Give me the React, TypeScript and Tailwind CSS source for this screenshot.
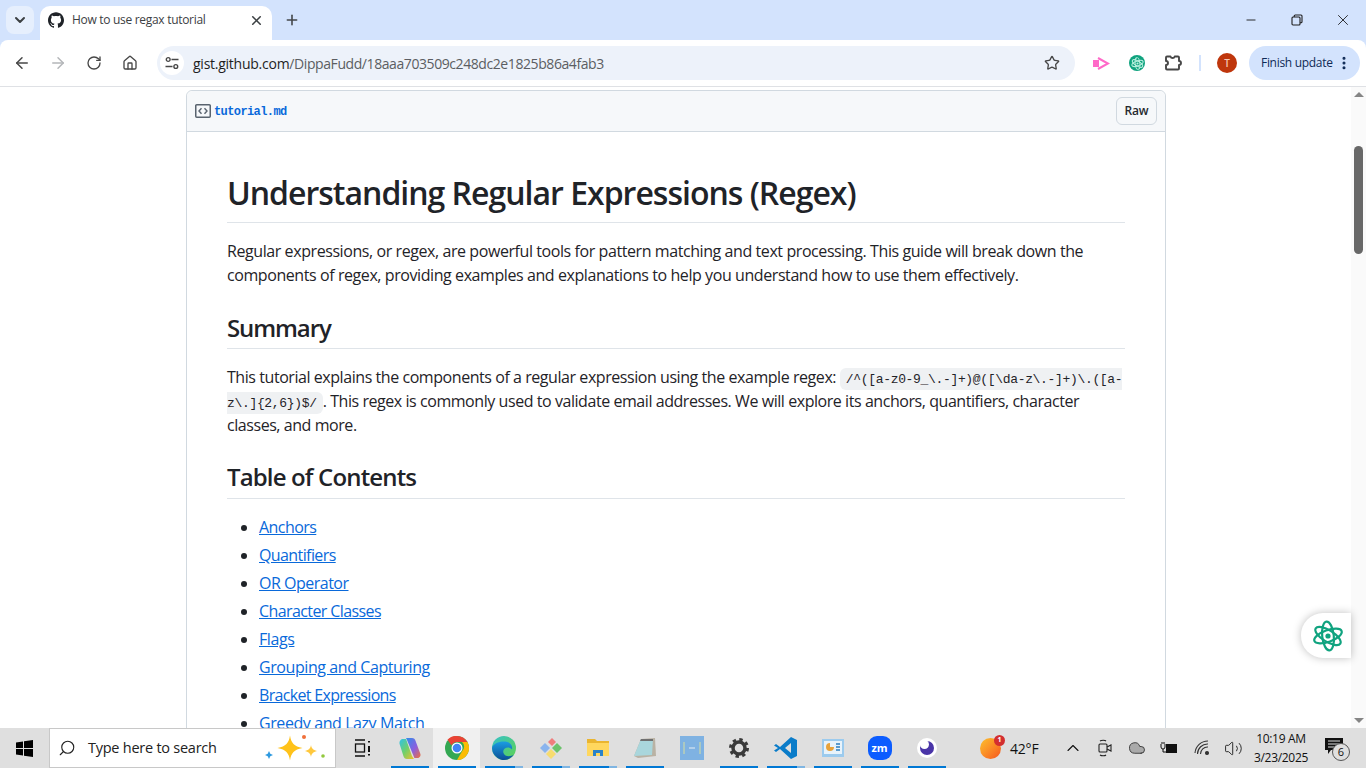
import { SiGithub } from "react-icons/si";
import { ArrowLeft, ArrowRight, RotateCw, Home, Star, Search, ChevronDown, ChevronUp, X, Plus, Minus, MoreVertical, Volume2, Cloud } from "lucide-react";

const sans = "font-['Open_Sans','Noto_Sans',sans-serif]";

function ChromeLogo({ size = 24 }: { size?: number }) {
  return (
    <svg width={size} height={size} viewBox="0 0 48 48">
      <circle cx="24" cy="24" r="24" fill="#34a853" />
      <path d="M24 0a24 24 0 0 1 20.8 12H24a12 12 0 0 0-10.9 7L5 7.6A24 24 0 0 1 24 0z" fill="#ea4335" />
      <path d="M44.8 12A24 24 0 0 1 24 48l10.4-18a12 12 0 0 0-.4-18z" fill="#fbbc04" />
      <circle cx="24" cy="24" r="11" fill="#fff" />
      <circle cx="24" cy="24" r="8.6" fill="#4285f4" />
    </svg>
  );
}

function GptFlower({ size = 32, color = "#10a37f", width = 2.2 }: { size?: number; color?: string; width?: number }) {
  return (
    <svg width={size} height={size} viewBox="0 0 32 32" fill="none" stroke={color} strokeWidth={width}>
      <ellipse cx="16" cy="16" rx="14.5" ry="5.8" transform="rotate(-20 16 16)" />
      <ellipse cx="16" cy="16" rx="14.5" ry="5.8" transform="rotate(32 16 16)" />
      <ellipse cx="16" cy="16" rx="14.5" ry="5.8" transform="rotate(84 16 16)" />
      <circle cx="16" cy="16" r="2.6" fill={color} stroke="none" />
    </svg>
  );
}

function Slot({ children, bar = "none", active = false }: { children?: React.ReactNode; bar?: "none" | "one" | "two"; active?: boolean }) {
  return (
    <div className={`relative flex h-full w-[47px] items-center justify-center ${active ? "bg-[#f0f0f0]" : ""}`}>
      {children}
      {bar !== "none" && (
        <div className="absolute bottom-0 left-[5px] flex h-[2px] w-[38px]">
          <div className={`h-full bg-[#0078d4] ${bar === "two" ? "w-[30px]" : "w-[38px]"}`} />
          {bar === "two" && <div className="h-full w-[8px] bg-[#7fb5e2]" />}
        </div>
      )}
    </div>
  );
}

const contents: [string, string][] = [
  ["Anchors", "tracking-[-0.56px]"],
  ["Quantifiers", "tracking-[-0.6px]"],
  ["OR Operator", "tracking-[-0.5px]"],
  ["Character Classes", "tracking-[-0.6px]"],
  ["Flags", "tracking-[-0.42px]"],
  ["Grouping and Capturing", "tracking-[-0.42px]"],
  ["Bracket Expressions", "tracking-[-0.68px]"],
  ["Greedy and Lazy Match", "tracking-[-0.42px]"],
];

function Code({ children }: { children: React.ReactNode }) {
  return (
    <code className="rounded-[6px] bg-[#eff1f3] px-[6px] py-[3.5px] font-['Liberation_Mono',monospace] text-[13px] leading-[16px] tracking-[-0.33px]">
      {children}
    </code>
  );
}

export default function App() {
  return (
    <div className={`flex h-[768px] w-[1366px] flex-col overflow-hidden bg-white text-[#1f2328] ${sans}`}>
      {/* tab strip */}
      <div className="flex h-[40px] shrink-0 items-end bg-[#d3e3fd]">
        <div className="mb-[6px] ml-[6px] flex h-[28px] w-[28px] items-center justify-center rounded-[8px] bg-[#e6effd]">
          <ChevronDown size={16} strokeWidth={3} className="text-[#3c4043]" />
        </div>
        <div className="ml-[6px] flex h-[34px] w-[232px] items-center rounded-t-[10px] bg-white pb-[6px] pl-[8px] pr-[8px]">
          <SiGithub size={16} className="text-[#1f2328]" />
          <span className="ml-[8px] flex-1 whitespace-nowrap text-[12px] tracking-[-0.3px] text-[#3c4043]">How to use regax tutorial</span>
          <X size={15} strokeWidth={2.5} className="text-[#3c4043]" />
        </div>
        <div className="mb-[6px] ml-[12px] flex h-[28px] w-[16px] items-center justify-center">
          <Plus size={16} strokeWidth={2.4} className="text-[#44474a]" />
        </div>
        <div className="flex-1" />
        <div className="flex h-[40px] items-center text-[#1f1f1f]">
          <div className="flex w-[46px] justify-center"><Minus size={14} strokeWidth={1.6} /></div>
          <div className="flex w-[46px] justify-center">
            <svg width="12" height="12" viewBox="0 0 12 12" fill="none" stroke="currentColor" strokeWidth="1.1"><rect x="1" y="3" width="8" height="8" rx="1" /><path d="M3.2 3V2a1 1 0 0 1 1-1H10a1 1 0 0 1 1 1v5.8a1 1 0 0 1-1 1H9" /></svg>
          </div>
          <div className="flex w-[46px] justify-center"><X size={18} strokeWidth={1.2} /></div>
        </div>
      </div>

      {/* toolbar */}
      <div className="shrink-0 bg-[#d3e3fd]">
        <div className="flex h-[47px] items-center rounded-t-[8px] border-b border-[#dfe1e5] bg-white">
          <div className="flex w-[157px] items-center text-[#474747]">
            <div className="flex w-[44px] justify-center"><ArrowLeft size={18} strokeWidth={2} /></div>
            <div className="flex w-[28px] justify-center text-[#b4b6b9]"><ArrowRight size={18} strokeWidth={2} /></div>
            <div className="flex w-[44px] justify-center"><RotateCw size={16} strokeWidth={2} /></div>
            <div className="flex w-[28px] justify-center"><Home size={16} strokeWidth={2} /></div>
          </div>
          <div className="flex h-[34px] w-[918px] items-center rounded-full bg-[#edf2fa] pl-[3px] pr-[15px]">
            <div className="flex h-[24px] w-[24px] items-center justify-center rounded-full bg-white">
              <svg width="14" height="14" viewBox="0 0 14 14" fill="none" stroke="#474747" strokeWidth="1.4"><circle cx="3.2" cy="3.5" r="1.9" /><path d="M6.500 3.500H13.500M.5 10.500H7.500" /><circle cx="10.800" cy="10.500" r="1.900" /></svg>
            </div>
            <span className="ml-[9px] flex-1 whitespace-nowrap text-[14px] tracking-[-0.25px] text-[#1f1f1f]">
              gist.github.com<span className="tracking-[-0.42px] text-[#5b5e62]">/DippaFudd/18aaa703509c248dc2e1825b86a4fab3</span>
            </span>
            <Star size={16} strokeWidth={2} className="text-[#474747]" />
          </div>
          <div className="ml-[17px] flex w-[18px] justify-center">
            <svg width="18" height="15" viewBox="0 0 18 15"><rect x="1" y="4" width="6" height="7" fill="#ff69c8" /><path d="M6 2l10 5.500-10 5.500" fill="none" stroke="#ff69c8" strokeWidth="2" /></svg>
          </div>
          <div className="ml-[19px] flex h-[16px] w-[16px] items-center justify-center rounded-full bg-[#10a37f]">
            <GptFlower size={13} color="#b9f0df" width={2.4} />
          </div>
          <div className="ml-[18px] flex w-[20px] justify-center">
            <svg width="20" height="20" viewBox="0 0 20 20" fill="none" stroke="#474747" strokeWidth="1.9" strokeLinejoin="round"><path d="M4 3.500H7.500a2.200 2.200 0 0 0 4.200 0H15a1 1 0 0 1 1 1V8a2 2 0 0 1 0 4v3.500a1 1 0 0 1-1 1H4a1 1 0 0 1-1-1V12a2 2 0 0 0 0-4V4.500a1 1 0 0 1 1-1z" /></svg>
          </div>
          <div className="ml-[16px] h-[16px] w-[2px] bg-[#d3e3fd]" />
          <div className="ml-[16px] flex h-[20px] w-[20px] items-center justify-center rounded-full bg-[#bf360c] text-[10px] font-semibold text-[#f7c7b5]">T</div>
          <div className="ml-[12px] flex h-[34px] w-[111px] items-center rounded-full bg-[#d3e3fd] pl-[12px] text-[12px] text-[#0f2a56]">
            <span className="flex-1 whitespace-nowrap tracking-[-0.3px]">Finish update</span>
            <MoreVertical size={16} strokeWidth={2.6} className="mr-[8px]" />
          </div>
        </div>
      </div>

      {/* page */}
      <div className="relative flex min-h-0 flex-1 overflow-hidden">
        <div className="min-w-0 flex-1 overflow-hidden pl-[186px] pr-[185px] pt-[3px]">
          <div className="rounded-t-[6px] border border-[#d1d9e0]">
            <div className="flex h-[41px] items-center justify-between rounded-t-[6px] border-b border-[#d1d9e0] bg-[#f6f8fa] pl-[8px] pr-[8px]">
              <div className="flex items-center">
                <svg width="16" height="16" viewBox="0 0 16 16" fill="#59636e"><path d="M1.750 1h12.500c.966 0 1.750.784 1.750 1.750v10.500A1.750 1.750 0 0 1 14.250 15H1.750A1.750 1.750 0 0 1 0 13.250V2.750C0 1.784.784 1 1.750 1ZM1.500 2.750v10.500c0 .138.112.25.25.25h12.500a.25.25 0 0 0 .25-.25V2.750a.25.25 0 0 0-.25-.25H1.750a.25.25 0 0 0-.25.25Z" /><path d="M6.500 5.200 4 8l2.500 2.800M9.500 5.200 12 8l-2.500 2.800" fill="none" stroke="#59636e" strokeWidth="1.4" /></svg>
                <span className="ml-[3px] mt-[1px] font-['Liberation_Mono',monospace] text-[12px] font-bold tracking-[-0.6px] text-[#0969da]">tutorial.md</span>
              </div>
              <div className="flex h-[28px] w-[41px] items-center justify-center rounded-[6px] border border-[#d1d9e0] bg-[#f6f8fa] text-[12px] font-semibold tracking-[-0.1px] text-[#25292e]">Raw</div>
            </div>
            <div className="px-[40px] pt-[40px] text-[16px] leading-[24px] tracking-[-0.42px]">
              <h1 className="mb-[16px] whitespace-nowrap border-b border-[#d1d9e0b3] pb-[8.6px] pt-[1px] text-[32px] font-semibold leading-[40px] tracking-[-1px]">Understanding Regular Expressions (Regex)</h1>
              <p className="mb-[16px] whitespace-nowrap">
                Regular expressions, or regex, are powerful tools for pattern matching and text processing. This guide will break down the<br />
                components of regex, providing examples and explanations to help you understand how to use them effectively.
              </p>
              <h2 className="mb-[16px] mt-[24px] border-b border-[#d1d9e0b3] pb-[5.2px] pt-[2px] text-[24px] font-semibold leading-[30px] tracking-[-1.1px]">Summary</h2>
              <p className="mb-[16px] whitespace-nowrap tracking-[-0.44px]">
                This tutorial explains the components of a regular expression using the example regex: <Code>{"/^([a-z0-9_\\.-]+)@([\\da-z\\.-]+)\\.([a-"}<br />{"z\\.]{2,6})$/"}</Code><span className="tracking-[-0.44px]">. This regex is commonly used to validate email addresses. We will explore its anchors, quantifiers, character</span><br />
                classes, and more.
              </p>
              <h2 className="mb-[16px] mt-[24px] border-b border-[#d1d9e0b3] pb-[5.7px] pt-[1.5px] text-[24px] font-semibold leading-[30px] tracking-[-0.85px]">Table of Contents</h2>
              <ul className="list-disc pl-[32px]">
                {contents.map(([c, t]) => (
                  <li key={c} className="mb-[4px]"><a className={`text-[#0969da] underline ${t}`}>{c}</a></li>
                ))}
              </ul>
            </div>
          </div>
        </div>
        {/* scrollbar */}
        <div className="flex h-full w-[15px] shrink-0 flex-col items-center bg-[#fafafa]">
          <div className="mt-[5px] h-0 w-0 border-x-[5px] border-b-[5px] border-x-transparent border-b-[#858585]" />
          <div className="mt-[49px] h-[108px] w-[9px] rounded-full bg-[#686868]" />
          <div className="flex-1" />
          <div className="mb-[5px] h-0 w-0 border-x-[5px] border-t-[5px] border-x-transparent border-t-[#858585]" />
        </div>
        {/* floating button */}
        <div className="absolute right-[15px] top-[526px] flex h-[45px] w-[50px] items-center justify-center rounded-l-[22px] bg-white pl-[4px] shadow-[0_0_8px_rgba(0,0,0,0.25)]">
          <GptFlower size={32} />
        </div>
      </div>

      {/* taskbar */}
      <div className="flex h-[40px] shrink-0 items-center bg-[#dfdfdf] text-[#111]">
        <div className="flex h-full w-[49px] items-center justify-center">
          <svg width="17" height="17" viewBox="0 0 17 17" fill="#000"><path d="M0 2.500 7 1.500v6.500H0zM8 1.300 17 0v8H8zM0 9h7v6.500L0 14.500zM8 9h9v8l-9-1.300z" /></svg>
        </div>
        <div className="flex h-full w-[287px] items-center border border-[#c8c8c8] bg-white pl-[8px]">
          <Search size={18} strokeWidth={1.5} className="-scale-x-100 text-[#222]" />
          <span className="ml-[12px] whitespace-nowrap text-[14.5px] tracking-[-0.25px] text-[#222]">Type here to search</span>
          <svg width="64" height="32" viewBox="0 0 64 32" className="ml-auto mr-[7px]">
            <path d="M26 3.500c1.200 7.500 4 11 12.500 12.500C30 17.500 27.200 21 26 28.500 24.800 21 22 17.500 13.500 16 22 14.500 24.800 11 26 3.500z" fill="#ffc21a" />
            <path d="M47 13c.6 3.200 1.800 5 6 6-4.200 1-5.400 2.800-6 6-.6-3.200-1.800-5-6-6 4.200-1 5.400-2.800 6-6z" fill="#ffc83d" />
            <path d="M5 19l1.300 2.700L9 23l-2.700 1.300L5 27l-1.300-2.700L1 23l2.700-1.300z" fill="#2f9ae0" />
            <circle cx="40" cy="5" r="2" fill="#f0703a" />
            <circle cx="59" cy="24" r="1.800" fill="#92c83e" />
          </svg>
        </div>
        <div className="flex h-full w-[50px] items-center justify-center pl-[3px]">
          <svg width="20" height="20" viewBox="0 0 20 20" fill="none" stroke="#111" strokeWidth="1.3"><path d="M2 2h10M2 18h10" /><rect x="2.500" y="6" width="9" height="8" /><path d="M16 3v1.500M16 8v6M16 16v1.500" strokeWidth="2" /></svg>
        </div>
        <Slot bar="one">
          <svg width="22" height="23" viewBox="0 0 22 23"><defs><linearGradient id="cp" x1="0" y1="0" x2="1" y2="1"><stop offset="0" stopColor="#2f8fe8" /><stop offset=".55" stopColor="#8a5fe0" /><stop offset="1" stopColor="#f0703a" /></linearGradient><linearGradient id="cp2" x1="0" y1="0" x2="1" y2="1"><stop offset="0" stopColor="#2fc2e8" /><stop offset=".5" stopColor="#6fd06a" /><stop offset="1" stopColor="#f5c02a" /></linearGradient></defs><path d="M7 1h6c2 0 3 1 3.600 3l4.800 13c.6 2-1 4-3 4h-3L8 3z" fill="url(#cp)" /><path d="M15 22H8c-2 0-3-1-3.600-3L.6 7C0 4 2 2 4 2h3l6 17z" fill="url(#cp2)" /></svg>
        </Slot>
        <Slot active bar="one"><ChromeLogo /></Slot>
        <Slot bar="two">
          <svg width="24" height="24" viewBox="0 0 24 24"><defs><linearGradient id="ed" x1="0" y1="0" x2="1" y2="1"><stop offset="0" stopColor="#35c1c9" /><stop offset="1" stopColor="#5fd34f" /></linearGradient><linearGradient id="ed2" x1="0" y1="0" x2="0" y2="1"><stop offset="0" stopColor="#1b9de2" /><stop offset="1" stopColor="#0b4f96" /></linearGradient></defs><circle cx="12" cy="12" r="12" fill="url(#ed)" /><path d="M0 12a12 12 0 0 0 22 6.500c-3 2-8 2.500-10-.5-2-3 0-6.500 4-6.500 2 0 3 1 4 2 1-5-3-8-8-8C6 5.500 1 8 0 12z" fill="url(#ed2)" /></svg>
        </Slot>
        <Slot bar="two">
          <svg width="24" height="24" viewBox="0 0 24 24"><path d="M12 5l4-4 4 4-4 4z" fill="#ef7d7d" transform="translate(-3 1)" /><path d="M1 12l5-5 5 5-5 5z" fill="#8ab4ee" /><path d="M13 12l5-5 5 5-5 5z" fill="#6cc36c" /><path d="M7 18l5-5 5 5-5 5z" fill="#f7dc6f" /></svg>
        </Slot>
        <Slot bar="two">
          <svg width="22" height="20" viewBox="0 0 22 20"><path d="M0 1h8l2 2h12v15H0z" fill="#eab530" /><path d="M0 5h22v13H0z" fill="#ffd75e" /><path d="M6 12h10v6h-3v-3H9v3H6z" fill="#2a82c9" /></svg>
        </Slot>
        <Slot bar="one">
          <svg width="24" height="24" viewBox="0 0 24 24"><path d="M8 3l14-1 1 18-18 2-4-2z" fill="#b9b2a4" /><path d="M8 3h12l-1 16-18 1z" fill="#a9d6dc" /><path d="M8 3h12v2H7z" fill="#6f6f6f" /></svg>
        </Slot>
        <Slot>
          <div className="flex h-[24px] w-[24px] items-center justify-center bg-[#7fb2e2]">
            <svg width="18" height="12" viewBox="0 0 18 12" fill="none"><path d="M1 0v12M17 0v12" stroke="#d9dfa0" /><path d="M6 6h6" stroke="#e8eef5" /></svg>
          </div>
        </Slot>
        <Slot bar="one">
          <svg width="22" height="22" viewBox="0 0 22 22" fill="none" stroke="#3a3a3a"><circle cx="11" cy="11" r="6" strokeWidth="3.500" /><circle cx="11" cy="11" r="8.500" strokeWidth="3" strokeDasharray="3.340 3.340" /></svg>
        </Slot>
        <Slot bar="two">
          <svg width="24" height="24" viewBox="0 0 24 24"><path d="M17 1l6 3v16l-6 3L6 13l-4 3-2-1.500L4 12 0 9.500 2 8l4 3z" fill="#0a7cc9" /><path d="M17 7l-6 5 6 5z" fill="#dfdfdf" /></svg>
        </Slot>
        <Slot bar="one">
          <svg width="22" height="18" viewBox="0 0 22 18"><rect width="22" height="18" fill="#9ccbee" /><rect x="2" y="2" width="18" height="13" fill="#e8f3fb" /><path d="M8 4a4 4 0 1 0 4 4H8z" fill="#e8a33c" /><path d="M14 5h4M14 8h4M14 11h4" stroke="#2a7fc0" strokeWidth="1.500" /></svg>
        </Slot>
        <Slot bar="one">
          <div className="flex h-[24px] w-[24px] items-center justify-center rounded-[9px] bg-[#0b5cff] text-[11px] font-bold text-white">zm</div>
        </Slot>
        <Slot bar="one">
          <svg width="20" height="20" viewBox="0 0 20 20"><circle cx="10" cy="10" r="10" fill="#fff" /><circle cx="10" cy="10" r="7" fill="#4a35a8" /><circle cx="7.500" cy="6.500" r="4.500" fill="#fff" /></svg>
        </Slot>
        <div className="flex-1" />
        <div className="relative mr-[9px] h-[21px] w-[21px] rounded-full bg-gradient-to-br from-[#fbc02d] to-[#f4511e]">
          <div className="absolute -right-[4px] -top-[3px] flex h-[11px] w-[11px] items-center justify-center rounded-full bg-[#d32f2f] text-[7px] font-bold text-white">1</div>
        </div>
        <span className="w-[47px] whitespace-nowrap text-[14px] tracking-[-0.2px]">42°F</span>
        <div className="flex w-[32px] justify-center"><ChevronUp size={20} strokeWidth={1.3} /></div>
        <div className="flex w-[32px] justify-center">
          <svg width="16" height="20" viewBox="0 0 16 20" fill="none" stroke="#222" strokeWidth="1.1"><rect x="2" y="6" width="8" height="8" rx="1" /><path d="M10 9l4-2v6l-4-2M3 3c1.500-1 5-1 6 0M3 17c1.500 1 5 1 6 0" /></svg>
        </div>
        <div className="flex w-[32px] justify-center"><Cloud size={18} strokeWidth={1.2} fill="#aaa" className="text-[#333]" /></div>
        <div className="flex w-[32px] justify-center">
          <svg width="18" height="12" viewBox="0 0 18 12"><path d="M1 2v3a2 2 0 0 0 4 0V2M2 0v2M4 0v2M3 7v3h3" fill="none" stroke="#111" /><rect x="6" y="2" width="11" height="9" fill="#111" /></svg>
        </div>
        <div className="flex w-[33px] justify-center">
          <svg width="16" height="16" viewBox="0 0 16 16" fill="none" stroke="#333" strokeWidth="1.100"><path d="M1 13a13 13 0 0 1 13-12M3.500 14a10 10 0 0 1 10.500-10M6.500 14a7 7 0 0 1 7.500-7" /><circle cx="13" cy="13" r="1.500" fill="#333" /></svg>
        </div>
        <div className="flex w-[31px] justify-center"><Volume2 size={19} strokeWidth={1.1} /></div>
        <div className="flex w-[64px] flex-col items-center whitespace-nowrap text-[12px] leading-[19px] tracking-[-0.3px]">
          <span>10:19 AM</span>
          <span>3/23/2025</span>
        </div>
        <div className="relative ml-[12px] mr-[21px] h-[20px] w-[20px]">
          <svg width="18" height="17" viewBox="0 0 18 17" fill="#111"><path d="M0 0h18v12H6l-3 4v-4H0z" /><path d="M3 3h12M3 6h12M3 9h8" stroke="#dfdfdf" /></svg>
          <div className="absolute left-[7px] top-[5px] flex h-[18px] w-[18px] items-center justify-center rounded-full border border-[#555] bg-[#dfdfdf] text-[11px]">6</div>
        </div>
      </div>
    </div>
  );
}
